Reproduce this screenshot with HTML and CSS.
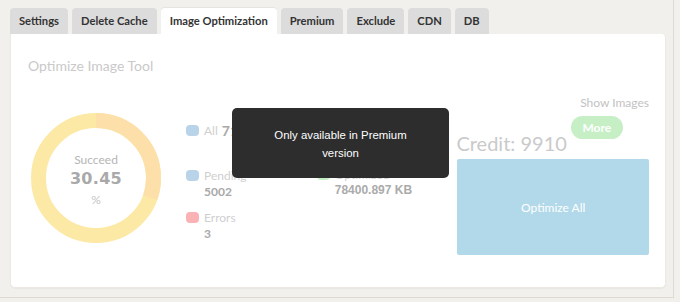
FILE: index.html
```html
<!DOCTYPE html>
<html>
<head>
<meta charset="utf-8">
<link rel="stylesheet" href="styles.css">
</head>
<body>
<div class="frame">
  <div class="tabs">
    <div class="tab">Settings</div>
    <div class="tab">Delete Cache</div>
    <div class="tab active">Image Optimization</div>
    <div class="tab">Premium</div>
    <div class="tab">Exclude</div>
    <div class="tab">CDN</div>
    <div class="tab">DB</div>
  </div>
  <div class="panel">
    <h3 class="title">Optimize Image Tool</h3>
    <div class="body">
      <div class="donut">
        <svg width="130" height="130" viewBox="0 0 130 130">
          <circle cx="65" cy="65" r="57.5" fill="none" stroke="#fde9a6" stroke-width="15"/>
          <circle cx="65" cy="65" r="57.5" fill="none" stroke="#fde0a9" stroke-width="15"
            stroke-dasharray="110.0 361.3" transform="rotate(-90 65 65)"/>
        </svg>
        <div class="donut-text">
          <div class="d-label">Succeed</div>
          <div class="d-value">30.45</div>
          <div class="d-unit">%</div>
        </div>
      </div>
      <div class="col col1">
        <div class="item row-all">
          <span class="sq blue"></span><span class="lbl">All</span> <b class="num">7193</b>
        </div>
        <div class="item row-pending">
          <span class="sq blue"></span>
          <div><div class="lbl">Pending</div><b class="num">5002</b></div>
        </div>
        <div class="item row-errors">
          <span class="sq pink"></span>
          <div><div class="lbl">Errors</div><b class="num">3</b></div>
        </div>
      </div>
      <div class="col col2">
        <div class="item row-saved">
          <span class="sq green"></span>
          <div><div class="lbl">Optimized</div><b class="num kb">78400.897 KB</b></div>
        </div>
      </div>
      <div class="right">
        <div class="show">Show Images</div>
        <div class="credit-row">
          <span class="credit">Credit: 9910</span>
          <span class="more">More</span>
        </div>
        <div class="optimize">Optimize All</div>
      </div>
    </div>
  </div>
  <div class="tooltip">Only available in Premium<br>version</div>
</div>
</body>
</html>
```

FILE: styles.css
```css
html, body {
  margin: 0;
  padding: 0;
  background: #f1f0ec;
}
body {
  font-family: Lato, "Open Sans", sans-serif;
  width: 680px;
  height: 302px;
  overflow: hidden;
}
.frame {
  position: relative;
  box-sizing: border-box;
  width: 674px;
  height: 298px;
  padding: 8px 0 0 10px;
  border-right: 1px solid #dcdad3;
  border-bottom: 1px solid #dcdad3;
}
.tabs {
  display: flex;
  gap: 4px;
  height: 26px;
}
.tab {
  box-sizing: border-box;
  height: 26px;
  padding: 0 9px;
  background: #dcdcdc;
  border-radius: 4px 4px 0 0;
  font-size: 11.2px;
  font-weight: 700;
  color: #333;
  line-height: 26px;
  white-space: nowrap;
}
.tab.active {
  background: #fff;
  box-shadow: 0 -1px 0 #e6e4de;
  position: relative;
  z-index: 1;
}
.panel {
  box-sizing: border-box;
  width: 656px;
  height: 254px;
  background: #fff;
  border-radius: 0 4px 5px 5px;
  border: 1px solid #ebe9e2;
  border-top: none;
  box-shadow: 0 1px 1px rgba(0,0,0,0.04);
  padding: 22px 16px 0 17px;
}
.title {
  margin: 0;
  font-size: 14px;
  font-weight: 400;
  color: #c9c9c9;
  line-height: 20px;
}
.body {
  display: flex;
  margin-top: 36px;
  position: relative;
}
.donut {
  position: relative;
  width: 130px;
  height: 130px;
  margin-left: 3px;
  margin-top: 1px;
}
.donut svg {
  display: block;
}
.donut-text {
  position: absolute;
  inset: 0;
  display: flex;
  flex-direction: column;
  align-items: center;
  justify-content: center;
  color: #b5b5b5;
  padding-top: 5px;
}
.d-label {
  font-size: 12px;
  line-height: 16px;
}
.d-value {
  font-family: "DejaVu Sans", sans-serif;
  font-weight: 700;
  font-size: 16px;
  line-height: 22px;
  color: #a9a9a9;
  letter-spacing: 0.3px;
}
.d-unit {
  font-size: 12px;
  line-height: 20px;
  color: #c3c3c3;
}
.col {
  display: flex;
  flex-direction: column;
}
.col1 {
  margin-left: 25px;
  width: 131px;
}
.col2 {
  width: 141px;
}
.item {
  display: flex;
  align-items: flex-start;
  font-size: 12px;
}
.sq {
  flex: none;
  width: 13px;
  height: 11px;
  border-radius: 4px;
  margin-right: 5px;
  margin-top: 2px;
}
.blue { background: #b9d4e8; }
.pink { background: #fbb2b4; }
.green { background: #c4efc2; }
.lbl {
  color: #cfcfcf;
  line-height: 15px;
}
.num {
  font-weight: 700;
  color: #a9a9a9;
  line-height: 17px;
}
.row-all {
  margin-top: 10px;
  align-items: center;
}
.row-all .sq { margin-top: 0; }
.row-all .num { margin-left: 4px; font-size: 14px; }
.row-pending {
  margin-top: 29px;
}
.row-errors {
  margin-top: 10px;
}
.row-saved {
  margin-top: 55px;
}
.kb {
  font-family: "Liberation Sans", Arial, sans-serif;
  font-size: 12px;
  font-weight: 700;
  color: #ababab;
}
.right {
  width: 192px;
  margin-top: -16px;
  display: flex;
  flex-direction: column;
}
.show {
  text-align: right;
  font-size: 12px;
  line-height: 14px;
  color: #c2c2c2;
}
.credit-row {
  display: flex;
  align-items: flex-start;
  height: 49px;
}
.credit {
  font-size: 20px;
  color: #cacaca;
  line-height: 30px;
  margin-top: 18px;
  margin-left: -1px;
  white-space: nowrap;
}
.more {
  margin-left: 4px;
  margin-top: 6px;
  width: 52px;
  height: 23px;
  border-radius: 12px;
  background: #c6efc6;
  color: #fff;
  font-size: 12px;
  font-weight: 700;
  text-align: center;
  line-height: 23px;
}
.optimize {
  height: 96px;
  background: #b2d9ea;
  border-radius: 2px;
  color: #fff;
  font-size: 12px;
  display: flex;
  align-items: center;
  justify-content: center;
}
.tooltip {
  position: absolute;
  left: 232px;
  top: 108px;
  width: 217px;
  height: 70px;
  box-sizing: border-box;
  padding-top: 18px;
  background: #2d2d2d;
  border-radius: 5px;
  color: #fff;
  font-family: "Liberation Sans", Arial, sans-serif;
  font-size: 11.4px;
  line-height: 18px;
  text-align: center;
}
```
